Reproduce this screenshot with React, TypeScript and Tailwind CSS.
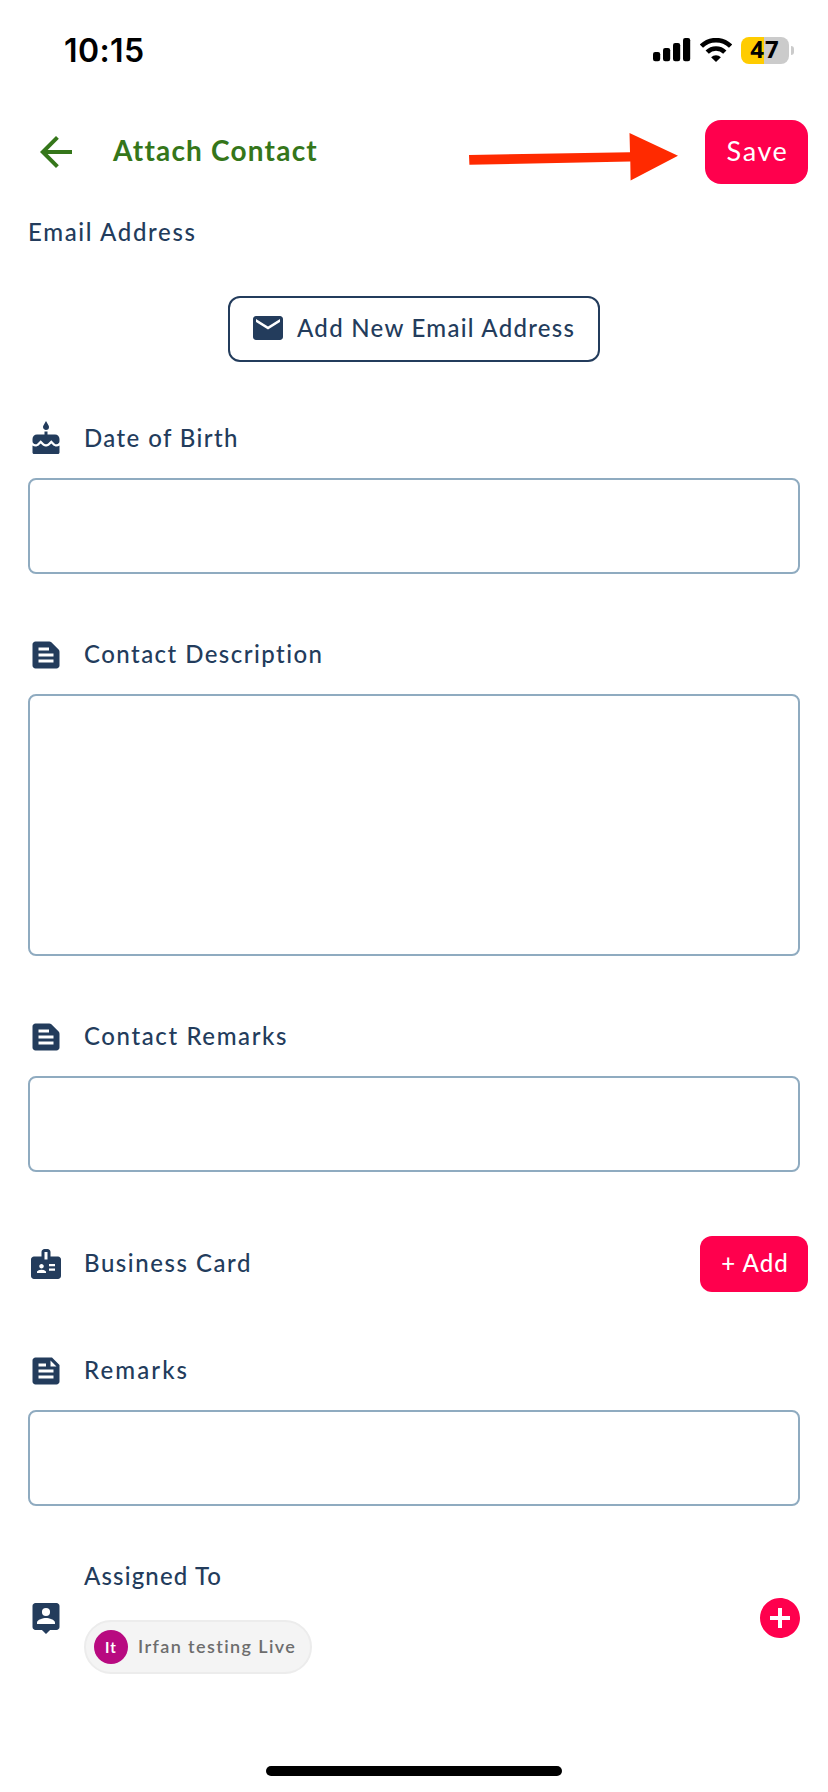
import type { ReactNode } from "react";
import type { IconType } from "react-icons";
import { MdAddCircle, MdArrowBack, MdBadge, MdCake, MdEmail, MdFeed, MdTextSnippet } from "react-icons/md";

function SignalIcon() {
  return (
    <svg width="38" height="24" viewBox="0 0 38 24" fill="#000">
      <rect x="0" y="14" width="7.2" height="9.2" rx="2.2" />
      <rect x="10" y="10" width="7.2" height="13.2" rx="2.2" />
      <rect x="20" y="5" width="7.2" height="18.2" rx="2.2" />
      <rect x="30" y="0" width="7.2" height="23.2" rx="2.2" />
    </svg>
  );
}

function WifiIcon() {
  return (
    <svg width="32" height="24" viewBox="0 0 32 24" fill="none" stroke="#000" strokeWidth="4.6">
      <path d="M1.4 8.2 A20.6 20.6 0 0 1 30.6 8.2" />
      <path d="M7.2 14.2 A12.4 12.4 0 0 1 24.8 14.2" />
      <path d="M16 24 L11.1 19.3 A7 7 0 0 1 20.9 19.3 Z" fill="#000" stroke="none" />
    </svg>
  );
}

function StatusBar() {
  return (
    <div className="flex h-[100px] items-center pl-16 pr-[34px]">
      <span className="mt-px text-[32px] font-semibold leading-none tracking-[0.4px] text-black" style={{ fontFamily: "Inter, sans-serif" }}>
        10:15
      </span>
      <div className="ml-auto flex items-center">
        <SignalIcon />
        <div className="ml-[9px]">
          <WifiIcon />
        </div>
        <div className="ml-[9px] flex h-[27px] w-12 items-center justify-center rounded-[8px] bg-[linear-gradient(to_right,#ffcc00_48%,#cbcbcb_48%)]">
          <span className="-mt-[2px] text-[24px] font-bold leading-none tracking-[1px] text-black" style={{ fontFamily: '"Noto Sans", sans-serif' }}>
            47
          </span>
        </div>
        <div className="ml-[2px] h-[9px] w-[3px] rounded-r-full bg-[#cbcbcb]" />
      </div>
    </div>
  );
}

function PersonPinIcon() {
  return (
    <svg width="36" height="36" viewBox="0 0 24 24" className="shrink-0">
      <path
        fill="#233c5c"
        fillRule="evenodd"
        d="M19 2H5c-1.1 0-2 .9-2 2v14c0 1.1.9 2 2 2h4.3l2.7 2.7 2.7-2.7H19c1.1 0 2-.9 2-2V4c0-1.1-.9-2-2-2zm-7 3.3a2.7 2.7 0 1 1 0 5.4 2.7 2.7 0 0 1 0-5.4zM18 16H6v-.9c0-2 4-3.1 6-3.1s6 1.1 6 3.1z"
      />
    </svg>
  );
}

function SectionHeader({ icon: Icon, label, tracking }: { icon: IconType; label: string; tracking: string }) {
  return (
    <div className="flex h-9 items-center">
      <Icon size={36} className="shrink-0" />
      <h2 className={`-mt-[3px] ml-5 text-[24px] font-medium leading-[30px] ${tracking}`}>{label}</h2>
    </div>
  );
}

function Field({ children, height }: { children: ReactNode; height: string }) {
  return (
    <section>
      {children}
      <div className={`mt-[21px] w-[772px] rounded-[8px] border-2 border-[#8fabc0] ${height}`} />
    </section>
  );
}

export default function App() {
  return (
    <div className="relative flex h-[1792px] w-[828px] flex-col bg-white text-[#233c5c]" style={{ fontFamily: "Lato, sans-serif" }}>
      <StatusBar />

      <header className="mt-5 flex h-16 items-center pl-8 pr-5">
        <MdArrowBack size={48} color="#35761a" />
        <h1 className="-mt-[4px] ml-[33px] text-[28px] font-bold leading-8 tracking-[1.2px] text-[#35761a]">Attach Contact</h1>
        <svg width="211" height="50" viewBox="0 0 211 50" className="ml-auto mt-[8px]">
          <path fill="#ff2a00" d="M1 24 162 21.2 161.5 2 210 24.7 162.6 49.5 162.3 30.6 1.4 33.8Z" />
        </svg>
        <button className="ml-[26px] h-16 w-[103px] rounded-2xl bg-[#ff004d] pb-[2px] pl-[2px] text-[27px] tracking-[1.6px] text-white">Save</button>
      </header>

      <main className="flex flex-col px-7">
        <h2 className="mt-[30px] h-9 text-[24px] font-medium leading-9 tracking-[1.65px]">Email Address</h2>
        <button className="mt-[46px] flex h-[66px] w-[372px] items-center self-center rounded-xl border-2 border-[#233c5c] pl-[20px]">
          <MdEmail size={36} className="-mt-[2px]" />
          <span className="-mt-[2px] ml-[11px] whitespace-nowrap text-[24px] font-medium tracking-[1.28px]">Add New Email Address</span>
        </button>

        <div className="mt-[59px] flex flex-col gap-[63px]">
          <Field height="h-24">
            <SectionHeader icon={MdCake} label="Date of Birth" tracking="tracking-[1.4px]" />
          </Field>
          <Field height="h-[262px]">
            <SectionHeader icon={MdTextSnippet} label="Contact Description" tracking="tracking-[1.45px]" />
          </Field>
          <Field height="h-24">
            <SectionHeader icon={MdTextSnippet} label="Contact Remarks" tracking="tracking-[1.6px]" />
          </Field>
        </div>

        <div className="-mr-2 mt-16 flex h-14 items-center justify-between">
          <SectionHeader icon={MdBadge} label="Business Card" tracking="tracking-[1.55px]" />
          <button className="h-14 w-[108px] rounded-xl bg-[#ff004d] pb-[3px] pl-[2px] text-[24px] font-medium tracking-[1.1px] text-white">+ Add</button>
        </div>

        <div className="mt-[61px]">
          <Field height="h-24">
            <SectionHeader icon={MdFeed} label="Remarks" tracking="tracking-[2.1px]" />
          </Field>
        </div>

        <section className="mt-[55px] flex h-[113px] items-center">
          <PersonPinIcon />
          <div className="ml-5">
            <h2 className="text-[24px] font-medium leading-[30px] tracking-[1.15px]">Assigned To</h2>
            <div className="mt-[29px] flex h-[54px] w-[228px] items-center rounded-full border-2 border-[#ececec] bg-[#f4f4f4] pl-2">
              <span className="flex size-[34px] items-center justify-center rounded-full bg-[#b80a80] text-[15px] font-bold tracking-[1px] text-white">It</span>
              <span className="-mt-px ml-[10px] whitespace-nowrap text-[18px] font-semibold tracking-[1.4px] text-[#6d6d6d]">Irfan testing Live</span>
            </div>
          </div>
          <MdAddCircle size={48} color="#ff004d" className="-mr-1 ml-auto" />
        </section>
      </main>

      <div className="mt-[92px] h-[10px] w-[296px] self-center rounded-full bg-black" />
    </div>
  );
}
